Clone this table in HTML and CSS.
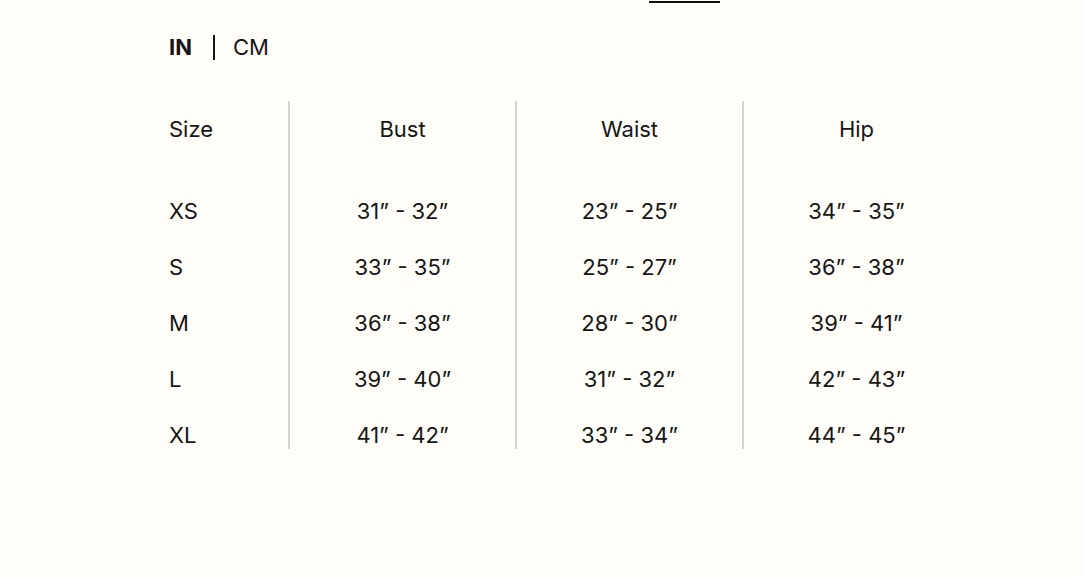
FILE: index.html
```html
<!DOCTYPE html>
<html lang="en">
<head>
<meta charset="utf-8">
<title>Size guide</title>
<link rel="stylesheet" href="styles.css">
</head>
<body>
<div class="page">
  <p class="intro">Still unsure of your size? <a class="intro-link" href="#">Get help</a></p>
  <div class="units">
    <span class="unit unit-active">IN</span>
    <span class="unit-sep"></span>
    <span class="unit">CM</span>
  </div>
  <div class="chart">
    <div class="col col-size">
      <div class="cell head">Size</div>
      <div class="cells">
        <div class="cell">XS</div>
        <div class="cell">S</div>
        <div class="cell">M</div>
        <div class="cell">L</div>
        <div class="cell">XL</div>
      </div>
    </div>
    <div class="col">
      <div class="cell head">Bust</div>
      <div class="cells">
        <div class="cell">31” - 32”</div>
        <div class="cell">33” - 35”</div>
        <div class="cell">36” - 38”</div>
        <div class="cell">39” - 40”</div>
        <div class="cell">41” - 42”</div>
      </div>
    </div>
    <div class="col">
      <div class="cell head">Waist</div>
      <div class="cells">
        <div class="cell">23” - 25”</div>
        <div class="cell">25” - 27”</div>
        <div class="cell">28” - 30”</div>
        <div class="cell">31” - 32”</div>
        <div class="cell">33” - 34”</div>
      </div>
    </div>
    <div class="col">
      <div class="cell head">Hip</div>
      <div class="cells">
        <div class="cell">34” - 35”</div>
        <div class="cell">36” - 38”</div>
        <div class="cell">39” - 41”</div>
        <div class="cell">42” - 43”</div>
        <div class="cell">44” - 45”</div>
      </div>
    </div>
  </div>
</div>
</body>
</html>
```
FILE: styles.css
```css
html, body {
  margin: 0;
  padding: 0;
  background: #fffdf8;
}
body {
  font-family: Inter, "Noto Sans", sans-serif;
  color: #161616;
  font-size: 22px;
  overflow: hidden;
}
.page {
  width: 800px;
  margin-left: 169px;
}
.intro {
  margin: -21px 0 0 0;
  height: 24px;
  line-height: 22px;
  text-align: right;
  padding-right: 249px;
  font-size: 17px;
  color: #222;
}
.intro-link {
  color: #111;
  text-decoration: none;
  display: inline-block;
  border-bottom: 2px solid #111;
  line-height: 22px;
  letter-spacing: 0.5px;
}
.units {
  display: flex;
  align-items: center;
  height: 28px;
  margin-top: 30px;
  line-height: 28px;
}
.unit {
  font-size: 22px;
}
.unit-active {
  font-weight: 700;
}
.unit-sep {
  width: 2px;
  height: 25px;
  background: #161616;
  margin: 0 18px 0 21px;
}
.chart {
  display: flex;
  margin-top: 40px;
}
.col {
  flex: 1;
  border-left: 2px solid #d6d4cf;
  text-align: center;
  padding-top: 14px;
}
.col-size {
  flex: 0 0 119px;
  border-left: none;
  text-align: left;
}
.cell {
  line-height: 28px;
  height: 28px;
  white-space: nowrap;
}
.cells {
  margin-top: 54px;
  display: flex;
  flex-direction: column;
  gap: 28px;
}
```
